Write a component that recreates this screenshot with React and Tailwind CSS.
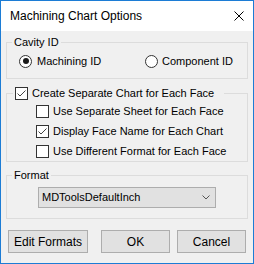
import React from 'react';

const Check = ({ checked }) => (
  <span className="w-[13px] h-[13px] shrink-0 border border-[#333333] bg-white flex items-center justify-center">
    {checked && (
      <svg width="11" height="11" viewBox="0 0 11 11" fill="none">
        <path d="M1.5 5.5 L4 8 L9.5 2.5" stroke="#444444" strokeWidth="1" />
      </svg>
    )}
  </span>
);

const Radio = ({ checked }) => (
  <span className="w-[13px] h-[13px] shrink-0 rounded-full border border-[#333333] bg-white flex items-center justify-center">
    {checked && <span className="w-[6px] h-[6px] rounded-full bg-[#1a1a1a]" />}
  </span>
);

const Button = ({ children, w }) => (
  <button className={`${w} h-[23px] border border-[#adadad] bg-[#e1e1e1] text-[12px] leading-none text-black`}>
    {children}
  </button>
);

export default function App() {
  return (
    <div className="w-[254px] h-[264px] border border-[#1c7cd5] bg-[#f0f0f0] flex flex-col font-['Liberation_Sans',Arial,sans-serif] text-[11px] text-black">
      {/* Title bar */}
      <div className="h-[30px] bg-white flex items-center justify-between pl-[9px] pr-[9px]">
        <span className="text-[12px]">Machining Chart Options</span>
        <svg width="10" height="10" viewBox="0 0 10 10">
          <path d="M0.5 0.5 L9.5 9.5 M9.5 0.5 L0.5 9.5" stroke="#000" strokeWidth="1" />
        </svg>
      </div>

      <div className="flex flex-col px-[5px]">
        {/* Cavity ID */}
        <fieldset className="mt-[4px] border border-[#dcdcdc] pb-[9px]">
          <legend className="ml-[5px] px-[2px] leading-[14px]">Cavity ID</legend>
          <div className="mt-[4px] h-[16px] flex items-center pl-[12px]">
            <div className="w-[126px] flex items-center gap-[5px]">
              <Radio checked />
              <span>Machining ID</span>
            </div>
            <div className="flex items-center gap-[4px]">
              <Radio />
              <span>Component ID</span>
            </div>
          </div>
        </fieldset>

        {/* Separate chart */}
        <fieldset className="mt-[7px] border border-[#dcdcdc]">
          <legend className="ml-[6px] pl-[2px] pr-[10px] h-[14px] flex items-center gap-[4px]">
            <Check checked />
            <span>Create Separate Chart for Each Face</span>
          </legend>
          <div className="flex flex-col pl-[29px] pt-[1px]">
            {[
              ['Use Separate Sheet for Each Face', false],
              ['Display Face Name for Each Chart', true],
              ['Use Different Format for Each Face', false],
            ].map(([label, c]) => (
              <div key={label} className="h-[20px] flex items-center gap-[4px]">
                <Check checked={c} />
                <span>{label}</span>
              </div>
            ))}
          </div>
        </fieldset>

        {/* Format */}
        <fieldset className="mt-[6px] border border-[#dcdcdc] pb-[10px]">
          <legend className="ml-[5px] px-[2px] leading-[14px]">Format</legend>
          <div className="mt-[5px] ml-[31px] w-[178px] h-[21px] border border-[#adadad] bg-[#e1e1e1] flex items-center justify-between pl-[3px] pr-[5px]">
            <span>MDToolsDefaultInch</span>
            <svg width="8" height="5" viewBox="0 0 8 5" fill="none">
              <path d="M0.5 0.5 L4 4 L7.5 0.5" stroke="#555" strokeWidth="1" />
            </svg>
          </div>
        </fieldset>

        {/* Buttons */}
        <div className="mt-[11px] flex items-center pl-[2px]">
          <Button w="w-[80px]">Edit Formats</Button>
          <div className="ml-[13px]">
            <Button w="w-[69px]">OK</Button>
          </div>
          <div className="ml-[7px]">
            <Button w="w-[69px]">Cancel</Button>
          </div>
        </div>
      </div>
    </div>
  );
}
